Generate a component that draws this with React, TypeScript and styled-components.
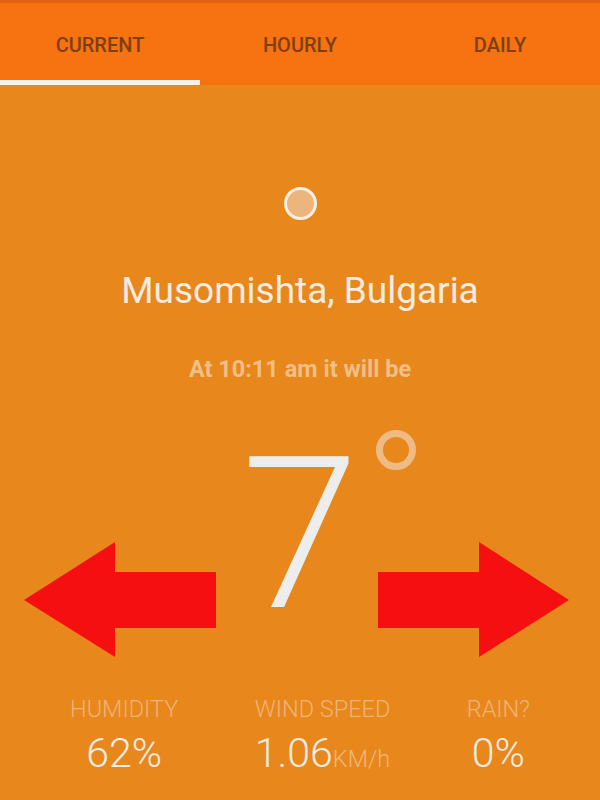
import styled, { createGlobalStyle } from 'styled-components';

const GlobalStyle = createGlobalStyle`
  html, body {
    margin: 0;
    padding: 0;
    background: #e8871b;
    font-family: Roboto, "Liberation Sans", sans-serif;
  }
  #root {
    min-height: 800px;
  }
`;

const Screen = styled.div`
  position: relative;
  width: 600px;
  height: 800px;
  overflow: hidden;
  background: #e8871b;
`;

const TabBar = styled.nav`
  display: flex;
  height: 82px;
  border-top: 3px solid #e0620e;
  background: #f77210;
`;

const Tab = styled.div<{ $active?: boolean }>`
  flex: 1;
  display: flex;
  align-items: center;
  justify-content: center;
  padding-top: 6px;
  font-size: 20px;
  font-weight: 500;
  color: #7f3f0c;
  border-bottom: 5px solid ${(p) => (p.$active ? '#f6f0ea' : 'transparent')};
`;

const Main = styled.main`
  display: flex;
  flex-direction: column;
  align-items: center;
`;

const SunDot = styled.div`
  box-sizing: border-box;
  width: 33px;
  height: 33px;
  margin-top: 102px;
  border-radius: 50%;
  border: 3.5px solid #f7efe4;
  background: #ecb57c;
`;

const City = styled.h1`
  margin: 52px 0 0;
  font-size: 37px;
  line-height: 1;
  font-weight: 400;
  color: #f4ece2;
`;

const Subtitle = styled.p`
  margin: 49px 0 0;
  font-size: 23.5px;
  line-height: 1;
  font-weight: 700;
  color: #f0bf85;
`;

const Temp = styled.div`
  position: relative;
  margin-top: 47px;
  font-size: 212px;
  line-height: 1;
  font-weight: 300;
  color: #ededec;
`;

const Degree = styled.span`
  position: absolute;
  top: 1px;
  left: calc(100% + 17px);
  box-sizing: border-box;
  width: 40px;
  height: 40px;
  border-radius: 50%;
  border: 7px solid #eebb84;
`;

const Stats = styled.section`
  align-self: stretch;
  display: flex;
  justify-content: space-between;
  padding: 0 70px;
  margin-top: 57px;
`;

const Stat = styled.div`
  display: flex;
  flex-direction: column;
  align-items: center;
  gap: 12px;
`;

const Label = styled.span`
  font-size: 23.5px;
  line-height: 1;
  font-weight: 300;
  color: #eeb478;
`;

const Value = styled.span`
  font-size: 41px;
  line-height: 1;
  font-weight: 300;
  color: #f4ede5;
`;

const Unit = styled.span`
  font-size: 23.5px;
  color: #efb87c;
`;

const ArrowSvg = styled.svg<{ $side: 'left' | 'right' }>`
  position: absolute;
  top: 542px;
  ${(p) => (p.$side === 'left' ? 'left: 24px;' : 'left: 378px;')}
  width: 192px;
  height: 115px;
  pointer-events: none;
`;

function Arrow({ side }: { side: 'left' | 'right' }) {
  const points =
    side === 'left'
      ? '0,58 91,0 91,30 192,30 192,86 91,86 91,115'
      : '0,30 101,30 101,0 191,58 101,115 101,86 0,86';
  return (
    <ArrowSvg $side={side} viewBox="0 0 192 115">
      <polygon points={points} fill="#f50f10" />
    </ArrowSvg>
  );
}

export default function App() {
  return (
    <Screen>
      <GlobalStyle />
      <TabBar>
        <Tab $active>CURRENT</Tab>
        <Tab>HOURLY</Tab>
        <Tab>DAILY</Tab>
      </TabBar>
      <Main>
        <SunDot />
        <City>Musomishta, Bulgaria</City>
        <Subtitle>At 10:11 am it will be</Subtitle>
        <Temp>
          7<Degree />
        </Temp>
        <Stats>
          <Stat>
            <Label>HUMIDITY</Label>
            <Value>62%</Value>
          </Stat>
          <Stat>
            <Label>WIND SPEED</Label>
            <Value>
              1.06<Unit>KM/h</Unit>
            </Value>
          </Stat>
          <Stat>
            <Label>RAIN?</Label>
            <Value>0%</Value>
          </Stat>
        </Stats>
      </Main>
      <Arrow side="left" />
      <Arrow side="right" />
    </Screen>
  );
}
